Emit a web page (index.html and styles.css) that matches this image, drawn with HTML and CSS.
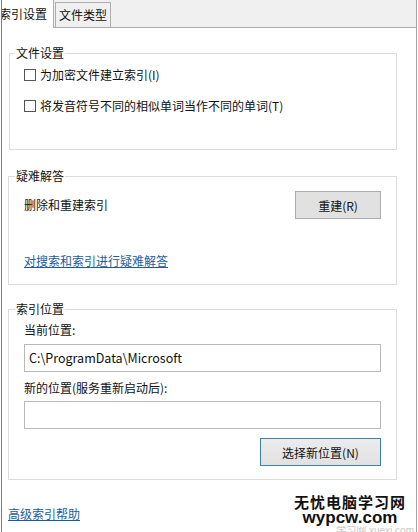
FILE: index.html
```html
<!DOCTYPE html>
<html>
<head>
<meta charset="utf-8">
<link rel="stylesheet" href="styles.css">
</head>
<body>
  <div class="window">
    <div class="tabs">
      <div class="tab active">索引设置</div>
      <div class="tab">文件类型</div>
    </div>

    <div class="panel">
      <fieldset class="group group-files">
        <legend>文件设置</legend>
        <label class="check"><span class="box"></span>为加密文件建立索引(I)</label>
        <label class="check second"><span class="box"></span>将发音符号不同的相似单词当作不同的单词(T)</label>
      </fieldset>

      <fieldset class="group group-trouble">
        <legend>疑难解答</legend>
        <div class="rebuild-row">
          <span>删除和重建索引</span>
          <button class="btn">重建(R)</button>
        </div>
        <a href="#" class="link trouble-link">对搜索和索引进行疑难解答</a>
      </fieldset>

      <fieldset class="group group-location">
        <legend>索引位置</legend>
        <div class="field-label">当前位置:</div>
        <div class="textbox">C:\ProgramData\Microsoft</div>
        <div class="field-label second">新的位置(服务重新启动后):</div>
        <div class="textbox empty"></div>
        <div class="btn-row">
          <button class="btn btn-default">选择新位置(N)</button>
        </div>
      </fieldset>

      <a href="#" class="link help-link">高级索引帮助</a>
    </div>

    <!-- site watermark over the corner -->
    <div class="watermark">
      <div class="wm-name">无忧电脑学习网</div>
      <div class="wm-url">wypcw.com</div>
      <div class="wm-faint">学习网 xuexi.com</div>
    </div>
  </div>
</body>
</html>
```

FILE: styles.css
```css
* {
  box-sizing: border-box;
}

body {
  margin: 0;
  width: 418px;
  height: 532px;
  overflow: hidden;
  background: #fff;
  font-family: "Noto Sans CJK SC", "Noto Sans", sans-serif;
  font-size: 12px;
  line-height: 16px;
  color: #111;
}

/* Dialog frame */
.window {
  position: relative;
  margin-left: 1px;
  width: 416px;
  height: 532px;
  border-left: 1px solid #7d7d7d;
  border-right: 1px solid #a3a3a3;
  background: #fff;
}

/* Tab strip */
.tabs {
  display: flex;
  align-items: flex-end;
  height: 28px;
  background: #f0f0f0;
  border-bottom: 1px solid #adadad;
}

.tab {
  height: 25px;
  padding: 0 3px;
  line-height: 24px;
  background: #f0f0f0;
  border: 1px solid #adadad;
  border-bottom: none;
  margin-left: 1px;
  width: 56px;
}

.tab.active {
  height: 28px;
  width: 52px;
  margin: 0 0 -1px 0;
  padding: 0;
  text-indent: -3px;
  line-height: 28px;
  background: #fff;
  border: none;
  border-right: 1px solid #adadad;
  overflow: hidden;
  white-space: nowrap;
}

/* Group boxes */
.group {
  margin: 0 19px 0 6px;
  padding: 0 15px 0 15px;
  border: 1px solid #dcdcdc;
  min-width: 0;
}

.group legend {
  padding: 0 1px;
  margin-left: -9px;
  line-height: 16px;
}

.group-files {
  margin-top: 17px;
  margin-left: 7px;
  padding-left: 14px;
  padding-top: 4px;
  padding-bottom: 33px;
}

.check {
  display: flex;
  align-items: center;
  height: 20px;
  white-space: nowrap;
}

.check.second {
  margin-top: 11px;
}

.box {
  width: 12px;
  height: 12px;
  border: 1px solid #555;
  background: #fff;
  margin-right: 4px;
  flex: none;
}

.group-trouble {
  margin-top: 18px;
  padding-top: 6px;
  padding-bottom: 15px;
}

.rebuild-row {
  display: flex;
  justify-content: space-between;
  align-items: center;
  padding-top: 1px;
}

.btn {
  font-family: inherit;
  font-size: 12px;
  color: #111;
  height: 28px;
  width: 86px;
  padding: 0;
  background: #e1e1e1;
  border: 1px solid #adadad;
  border-radius: 0;
}

.btn-default {
  width: 121px;
  border-color: #3c7fb1;
  background: linear-gradient(#ececec, #e1e1e1);
}

.link {
  display: block;
  color: #1a5c9e;
  text-decoration: underline;
}

.trouble-link {
  margin-top: 34px;
  width: max-content;
}

.group-location {
  margin-top: 16px;
  padding-bottom: 13px;
}

.field-label {
  margin-top: 5px;
}

.field-label.second {
  margin-top: 8px;
}

.textbox {
  margin-top: 6px;
  height: 28px;
  border: 1px solid #b9b9b9;
  padding: 0 4px;
  line-height: 26px;
  font-size: 12.5px;
  background: #fff;
}

.textbox.empty {
  margin-top: 5px;
}

.btn-row {
  display: flex;
  justify-content: flex-end;
  margin-top: 9px;
}

.help-link {
  margin: 26px 0 0 6px;
  width: max-content;
}

/* Watermark stamped on the screenshot */
.watermark {
  position: absolute;
  right: 10px;
  bottom: 0;
  text-align: center;
  font-family: "Noto Sans CJK SC", sans-serif;
  font-weight: bold;
  color: #111;
}

.wm-name {
  font-size: 15px;
  line-height: 15px;
  letter-spacing: 1px;
}

.wm-url {
  font-family: "Liberation Sans", sans-serif;
  font-size: 17px;
  line-height: 17px;
}

.wm-faint {
  font-family: "Liberation Sans", "Noto Sans CJK SC", sans-serif;
  font-weight: normal;
  font-size: 10px;
  line-height: 10px;
  height: 6px;
  overflow: hidden;
  color: #c8c8c8;
  text-align: right;
  margin-right: -8px;
}
```
